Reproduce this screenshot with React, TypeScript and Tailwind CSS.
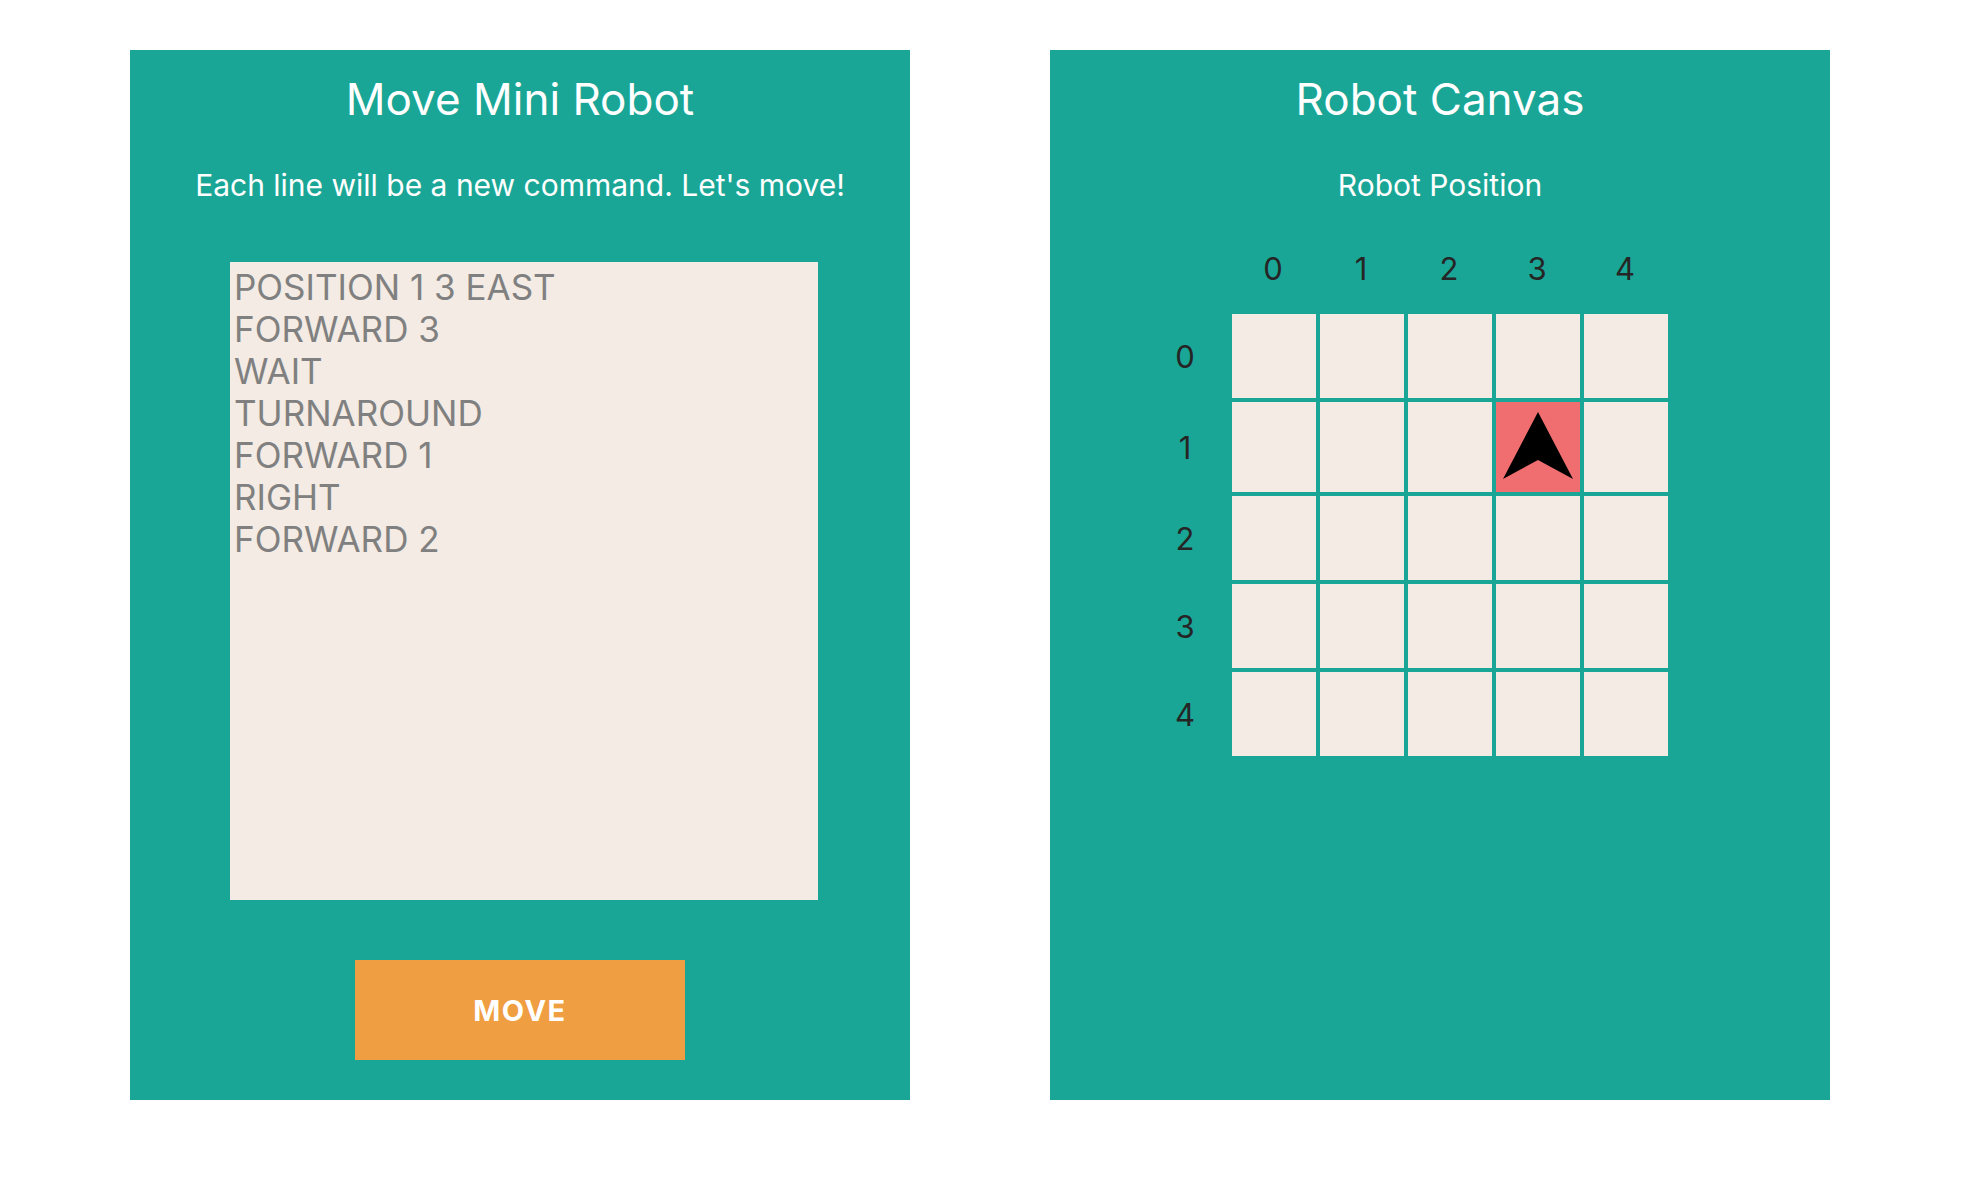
import type { ReactNode } from "react";

const SIZE = 5;
const AXIS = Array.from({ length: SIZE }, (_, i) => i);
const ROBOT = { row: 1, column: 3 };

const EXAMPLE_COMMANDS = [
  "POSITION 1 3 EAST",
  "FORWARD 3",
  "WAIT",
  "TURNAROUND",
  "FORWARD 1",
  "RIGHT",
  "FORWARD 2",
].join("\n");

function Panel({ title, children }: { title: string; children: ReactNode }) {
  return (
    <section className="min-w-0 flex-1 bg-[#1aa696] pt-5 pb-10">
      <h1 className="text-center text-[44px] leading-[58px] text-white">{title}</h1>
      {children}
    </section>
  );
}

function RobotArrow() {
  return (
    <svg viewBox="0 0 84 90" className="block h-[90px] w-[84px]" role="img" aria-label="Robot facing north">
      <path d="M42 10 77 77 42 58 7 77Z" fill="#000" />
    </svg>
  );
}

function Board() {
  return (
    <table className="ml-[90px] border-separate border-spacing-1 text-[31px] leading-10 text-[#252525]">
      <thead>
        <tr>
          <td className="size-[84px] p-0" />
          {AXIS.map((column) => (
            <th key={column} scope="col" className="size-[84px] p-0 pt-0.5 pr-0.5 text-center font-normal">
              {column}
            </th>
          ))}
        </tr>
      </thead>
      <tbody>
        {AXIS.map((row) => (
          <tr key={row}>
            <th scope="row" className="size-[84px] p-0 pt-0.5 pr-0.5 text-center font-normal">
              {row}
            </th>
            {AXIS.map((column) =>
              row === ROBOT.row && column === ROBOT.column ? (
                <td key={column} className="size-[84px] bg-[#f06e70] p-0">
                  <RobotArrow />
                </td>
              ) : (
                <td key={column} className="size-[84px] bg-[#f3ebe4] p-0" />
              ),
            )}
          </tr>
        ))}
      </tbody>
    </table>
  );
}

export default function App() {
  return (
    <main className="flex gap-[140px] bg-white pt-[50px] pr-[140px] pb-[104px] pl-[130px] font-['Inter',sans-serif]">
      <Panel title="Move Mini Robot">
        <form onSubmit={(event) => event.preventDefault()}>
          <label htmlFor="commands" className="mt-9 block text-center text-[30px] leading-[42px] text-white">
            Each line will be a new command. Let's move!
          </label>
          <textarea
            id="commands"
            placeholder={EXAMPLE_COMMANDS}
            className="mt-14 mr-[92px] ml-[100px] block h-[638px] w-[588px] resize-none bg-[#f3ebe4] p-1 text-[35px] leading-[42px] text-black outline-none placeholder:text-[#808080]"
          />
          <button
            type="submit"
            className="mx-auto mt-[60px] block h-[100px] w-[330px] bg-[#f09e42] pt-0.5 text-[29px] font-bold tracking-wider text-white"
          >
            MOVE
          </button>
        </form>
      </Panel>
      <Panel title="Robot Canvas">
        <p className="mt-9 mb-4 text-center text-[30px] leading-[42px] text-white">Robot Position</p>
        <Board />
      </Panel>
    </main>
  );
}
